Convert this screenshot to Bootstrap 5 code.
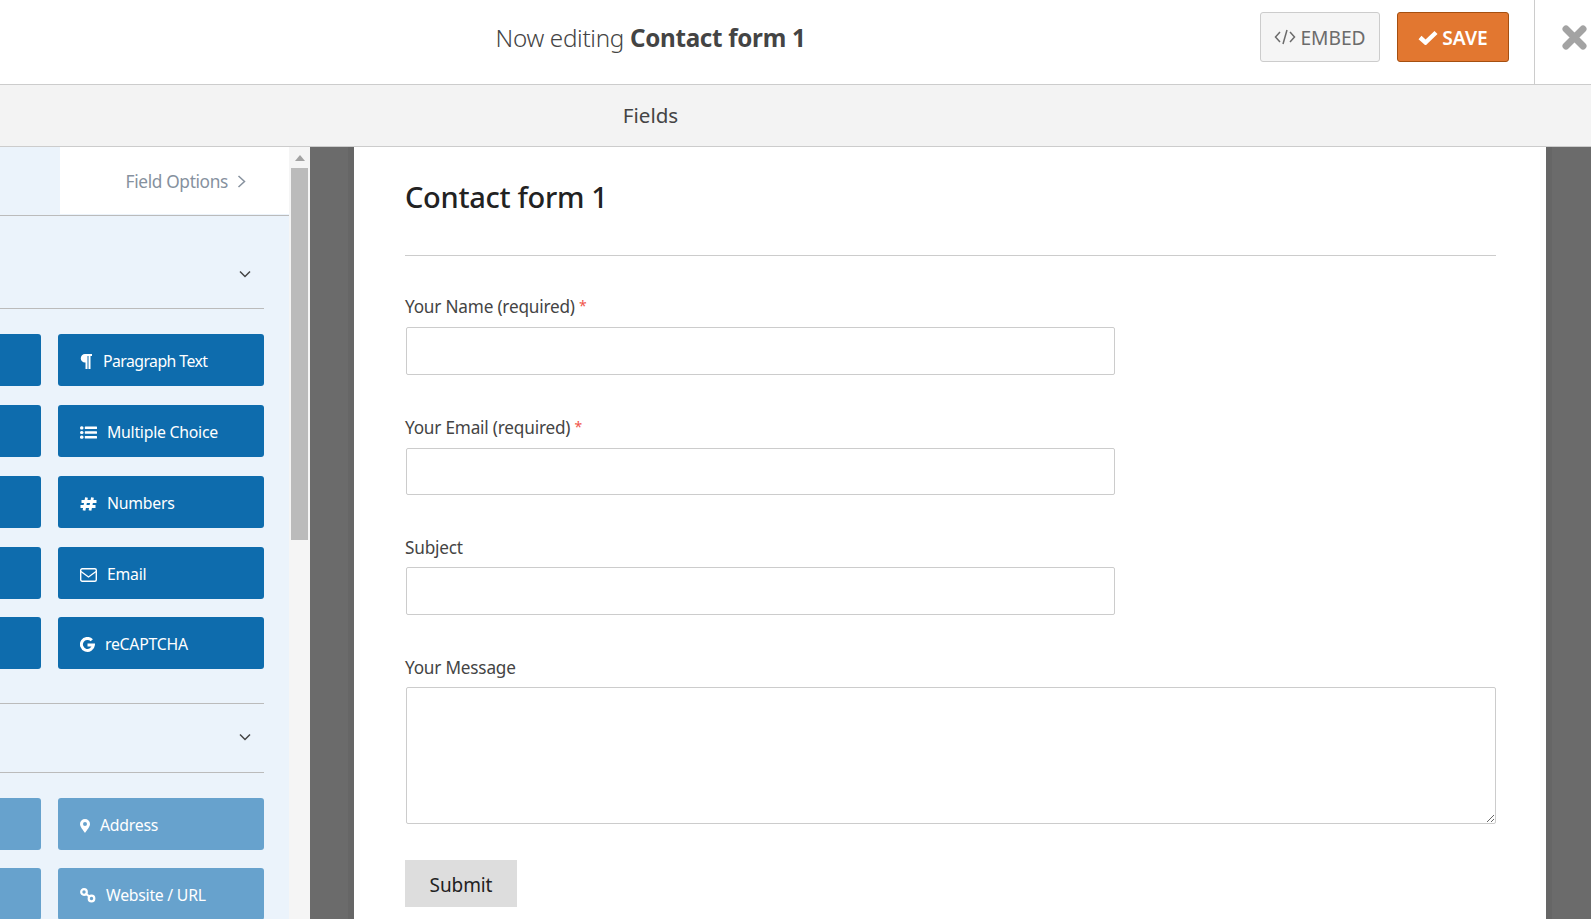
<!DOCTYPE html>
<html lang="en">
<head>
  <meta charset="UTF-8" />
  <title>Contact form 1</title>
  <link href="https://cdn.jsdelivr.net/npm/bootstrap@5.3.0/dist/css/bootstrap.min.css" rel="stylesheet" />
  <script src="https://cdn.jsdelivr.net/npm/bootstrap@5.3.0/dist/js/bootstrap.bundle.min.js"></script>
  <style>
    html, body { height: 100%; overflow: hidden; }
    body { font-family: "Noto Sans", "Open Sans", sans-serif; color: #444; background: #fff; }

    .top-bar { height: 85px; border-bottom: 1px solid #ccc; }
    .top-title { width: 1301px; font-size: 24.2px; font-weight: 300; color: #444; letter-spacing: -.3px; margin-bottom: 8px; }
    .top-title strong { font-weight: 700; }
    .btn-embed, .btn-save { height: 50px; font-size: 19.2px; padding: 0; border-radius: 3px; margin-bottom: 10px; }
    .btn-embed { width: 120px; color: #6b6b6b; background: #f5f5f5; border: 1px solid #ccc; margin-left: -41px; }
    .btn-save { width: 112px; color: #fff; font-weight: 600; background: #e27730; border: 1px solid #a54f10; margin-left: 17px; }
    .btn-text { padding-top: 2px; }
    .close-box { width: 57px; height: 84px; margin-left: 25px; padding-bottom: 9px; border-left: 1px solid #ccc; }

    .sub-bar { height: 62px; background: #f3f3f3; border-bottom: 1px solid #ccc; }
    .sub-title { width: 1301px; font-size: 20.6px; color: #444; }

    .main-area { height: 772px; }
    .side-panel { width: 289px; background: #ebf3fb; }
    .side-tabs { height: 69px; border-bottom: 1px solid #bbb; }
    .tab-blank { width: 60px; height: 67px; }
    .tab-active { height: 67px; background: #fff; color: #86919e; font-size: 17.3px; letter-spacing: -.35px; padding: 2px 43px 0 0; column-gap: 9px; }
    .section-head { height: 93px; width: 264px; border-bottom: 1px solid #bbb; padding: 54px 13px 0 0; margin-bottom: 25px; }
    .section-head.short { height: 70px; padding-top: 29px; margin-top: 15px; border-top: 1px solid #bbb; }
    .field-grid { display: grid; grid-template-columns: 206px 206px; column-gap: 17px; width: 429px; margin-left: -165px; }
    .field-btn { height: 52px; border-radius: 3px; color: #fff; font-size: 15.8px; letter-spacing: -.25px; background: #0e6cad; padding: 3px 0 0 22px; margin-bottom: 19px; column-gap: 10px; }
    .field-btn.off { background: #67a2cd; }
    .field-btn.row-tight { margin-bottom: 18px; }
    .field-btn svg { flex: none; }
    .label-narrow { letter-spacing: -.55px; margin-left: 1px; }

    .scroll-track { width: 21px; background: #f5f5f5; padding: 0 2px; }
    .scroll-arrow { height: 21px; }
    .scroll-thumb { height: 372px; background: #bbb; }

    .canvas-area { background: #6b6b6b; padding: 0 45px 0 44px; overflow: hidden; }
    .form-sheet { background: #fff; height: 100%; padding: 28px 50px 0 51px; box-shadow: -6px 0 0 #666, 6px 0 0 #666; }
    .form-name { font-size: 29px; font-weight: 500; color: #222; letter-spacing: -.3px; line-height: 44px; margin: 0 0 36px; }
    .form-line { height: 1px; background: #ccc; margin-bottom: 36px; }
    .field-label { font-size: 17.2px; color: #444; letter-spacing: -.2px; line-height: 29px; margin-bottom: 5px; display: block; }
    .req-mark { color: #f0554a; font-size: 14px; position: relative; top: -2px; }
    .field-input { width: 709px; height: 48px; margin-left: 1px; margin-bottom: 38px; border: 1px solid #ccc; border-radius: 2px; box-shadow: none; }
    .field-input.second { height: 47px; }
    .field-area { width: 1090px; height: 137px; margin-left: 1px; margin-bottom: 36px; border: 1px solid #ccc; border-radius: 2px; padding: 0; box-shadow: none; }
    .btn-submit { width: 112px; height: 47px; background: #ddd; color: #222; font-size: 19px; letter-spacing: -.1px; border: 0; border-radius: 0; padding: 3px 0 0; }
  </style>
</head>
<body>

  <!-- Top bar -->
  <div class="top-bar d-flex align-items-center">
    <div class="top-title text-center">Now editing <strong>Contact form 1</strong></div>
    <button type="button" class="btn btn-embed d-flex align-items-center justify-content-center gap-1">
      <svg width="22" height="16" viewBox="0 0 22 16" fill="none" stroke="#6b6b6b" stroke-width="1.5"><path d="M6 3 1.5 8 6 13M16 3 20.5 8 16 13M13 1 9 15"/></svg>
      <span class="btn-text">EMBED</span>
    </button>
    <button type="button" class="btn btn-save d-flex align-items-center justify-content-center gap-1">
      <svg width="20" height="15" viewBox="0 0 20 15" fill="none" stroke="#fff" stroke-width="4.4"><path d="M2 7.5 7.5 12.5 18 2.5"/></svg>
      <span class="btn-text">SAVE</span>
    </button>
    <div class="close-box d-flex align-items-center justify-content-end pe-1">
      <svg width="25" height="25" viewBox="0 0 25 25" fill="none" stroke="#a3a3a3" stroke-width="7" stroke-linecap="round"><path d="M4 4 21 21M21 4 4 21"/></svg>
    </div>
  </div>

  <!-- Section title -->
  <div class="sub-bar d-flex align-items-center">
    <div class="sub-title text-center">Fields</div>
  </div>

  <div class="main-area d-flex">
    <!-- Fields panel -->
    <div class="side-panel overflow-hidden flex-shrink-0">
      <div class="side-tabs d-flex">
        <div class="tab-blank"></div>
        <div class="tab-active flex-grow-1 d-flex align-items-center justify-content-end">
          Field Options
          <svg width="9" height="13" viewBox="0 0 9 13" fill="none" stroke="#86919e" stroke-width="1.5"><path d="M1.500 1 7.500 6.500 1.500 12"/></svg>
        </div>
      </div>

      <div class="section-head d-flex justify-content-end">
        <svg width="12" height="8" viewBox="0 0 12 8" fill="none" stroke="#444" stroke-width="1.5"><path d="M1 1.500 6 6.500 11 1.500"/></svg>
      </div>

      <div class="field-grid">
        <div class="field-btn"></div>
        <div class="field-btn d-flex align-items-center">
          <svg width="12" height="15" viewBox="0 0 12 15" fill="#fff"><path d="M5 0H12V2H10.500V15H8.500V2H7.500V15H5.500V8.500H5A4.250 4.250 0 0 1 5 0Z"/></svg>
          <span class="label-narrow">Paragraph Text</span>
        </div>
        <div class="field-btn"></div>
        <div class="field-btn d-flex align-items-center">
          <svg width="17" height="13" viewBox="0 0 17 13" fill="#fff"><rect y=".2" width="3.500" height="3.200" rx="1.500"/><rect y="4.900" width="3.500" height="3.200" rx="1.500"/><rect y="9.600" width="3.500" height="3.200" rx="1.500"/><rect x="4.800" y=".5" width="12.200" height="2.600" rx=".5"/><rect x="4.800" y="5.200" width="12.200" height="2.600" rx=".5"/><rect x="4.800" y="9.900" width="12.200" height="2.600" rx=".5"/></svg>
          <span>Multiple Choice</span>
        </div>
        <div class="field-btn"></div>
        <div class="field-btn d-flex align-items-center">
          <svg width="17" height="14" viewBox="0 0 17 14" fill="none" stroke="#fff" stroke-width="2.800"><path d="M6.500 0.500 4 13.500M12.500 0.500 10 13.500M1.500 4.500H16.500M0.500 9.500H15.500"/></svg>
          <span>Numbers</span>
        </div>
        <div class="field-btn row-tight"></div>
        <div class="field-btn row-tight d-flex align-items-center">
          <svg width="17" height="14" viewBox="0 0 17 14" fill="none" stroke="#fff" stroke-width="1.400"><rect x=".7" y=".7" width="15.600" height="12.600" rx="1.500"/><path d="M1 3.500 8.500 9 16 3.500"/></svg>
          <span>Email</span>
        </div>
        <div class="field-btn"></div>
        <div class="field-btn d-flex align-items-center">
          <svg width="15" height="15" viewBox="0 0 15 15" fill="none" stroke="#fff" stroke-width="3"><path d="M11.800 3.300A6 6 0 1 0 13.400 8H7.500"/></svg>
          <span>reCAPTCHA</span>
        </div>
      </div>

      <div class="section-head short d-flex justify-content-end">
        <svg width="12" height="8" viewBox="0 0 12 8" fill="none" stroke="#444" stroke-width="1.500"><path d="M1 1.500 6 6.500 11 1.500"/></svg>
      </div>

      <div class="field-grid">
        <div class="field-btn off row-tight"></div>
        <div class="field-btn off row-tight d-flex align-items-center">
          <svg width="10" height="14" viewBox="0 0 10 14" fill="#fff"><path fill-rule="evenodd" d="M5 0A5 5 0 0 1 10 5C10 8 6.500 11.500 5 14C3.500 11.500 0 8 0 5A5 5 0 0 1 5 0ZM5 3A2 2 0 1 0 5 7A2 2 0 1 0 5 3Z"/></svg>
          <span>Address</span>
        </div>
        <div class="field-btn off"></div>
        <div class="field-btn off d-flex align-items-center">
          <svg width="16" height="15" viewBox="0 0 16 15" fill="none" stroke="#fff" stroke-width="2.200"><circle cx="4" cy="4" r="2.800"/><circle cx="11.500" cy="10.500" r="2.800"/><path d="M5.500 5.500 10 9"/></svg>
          <span>Website / URL</span>
        </div>
      </div>
    </div>

    <!-- Scrollbar -->
    <div class="scroll-track flex-shrink-0">
      <div class="scroll-arrow d-flex align-items-center justify-content-center">
        <svg width="10" height="6" viewBox="0 0 10 6" fill="#a3a3a3"><path d="M5 0 10 6H0Z"/></svg>
      </div>
      <div class="scroll-thumb"></div>
    </div>

    <!-- Form preview -->
    <div class="canvas-area flex-grow-1">
      <div class="form-sheet">
        <h2 class="form-name">Contact form 1</h2>
        <div class="form-line"></div>
        <form>
          <label class="field-label">Your Name (required) <span class="req-mark">*</span></label>
          <input type="text" class="form-control field-input">
          <label class="field-label">Your Email (required) <span class="req-mark">*</span></label>
          <input type="text" class="form-control field-input second">
          <label class="field-label">Subject</label>
          <input type="text" class="form-control field-input">
          <label class="field-label">Your Message</label>
          <textarea class="form-control field-area"></textarea>
          <button type="button" class="btn btn-submit">Submit</button>
        </form>
      </div>
    </div>
  </div>

</body>
</html>
